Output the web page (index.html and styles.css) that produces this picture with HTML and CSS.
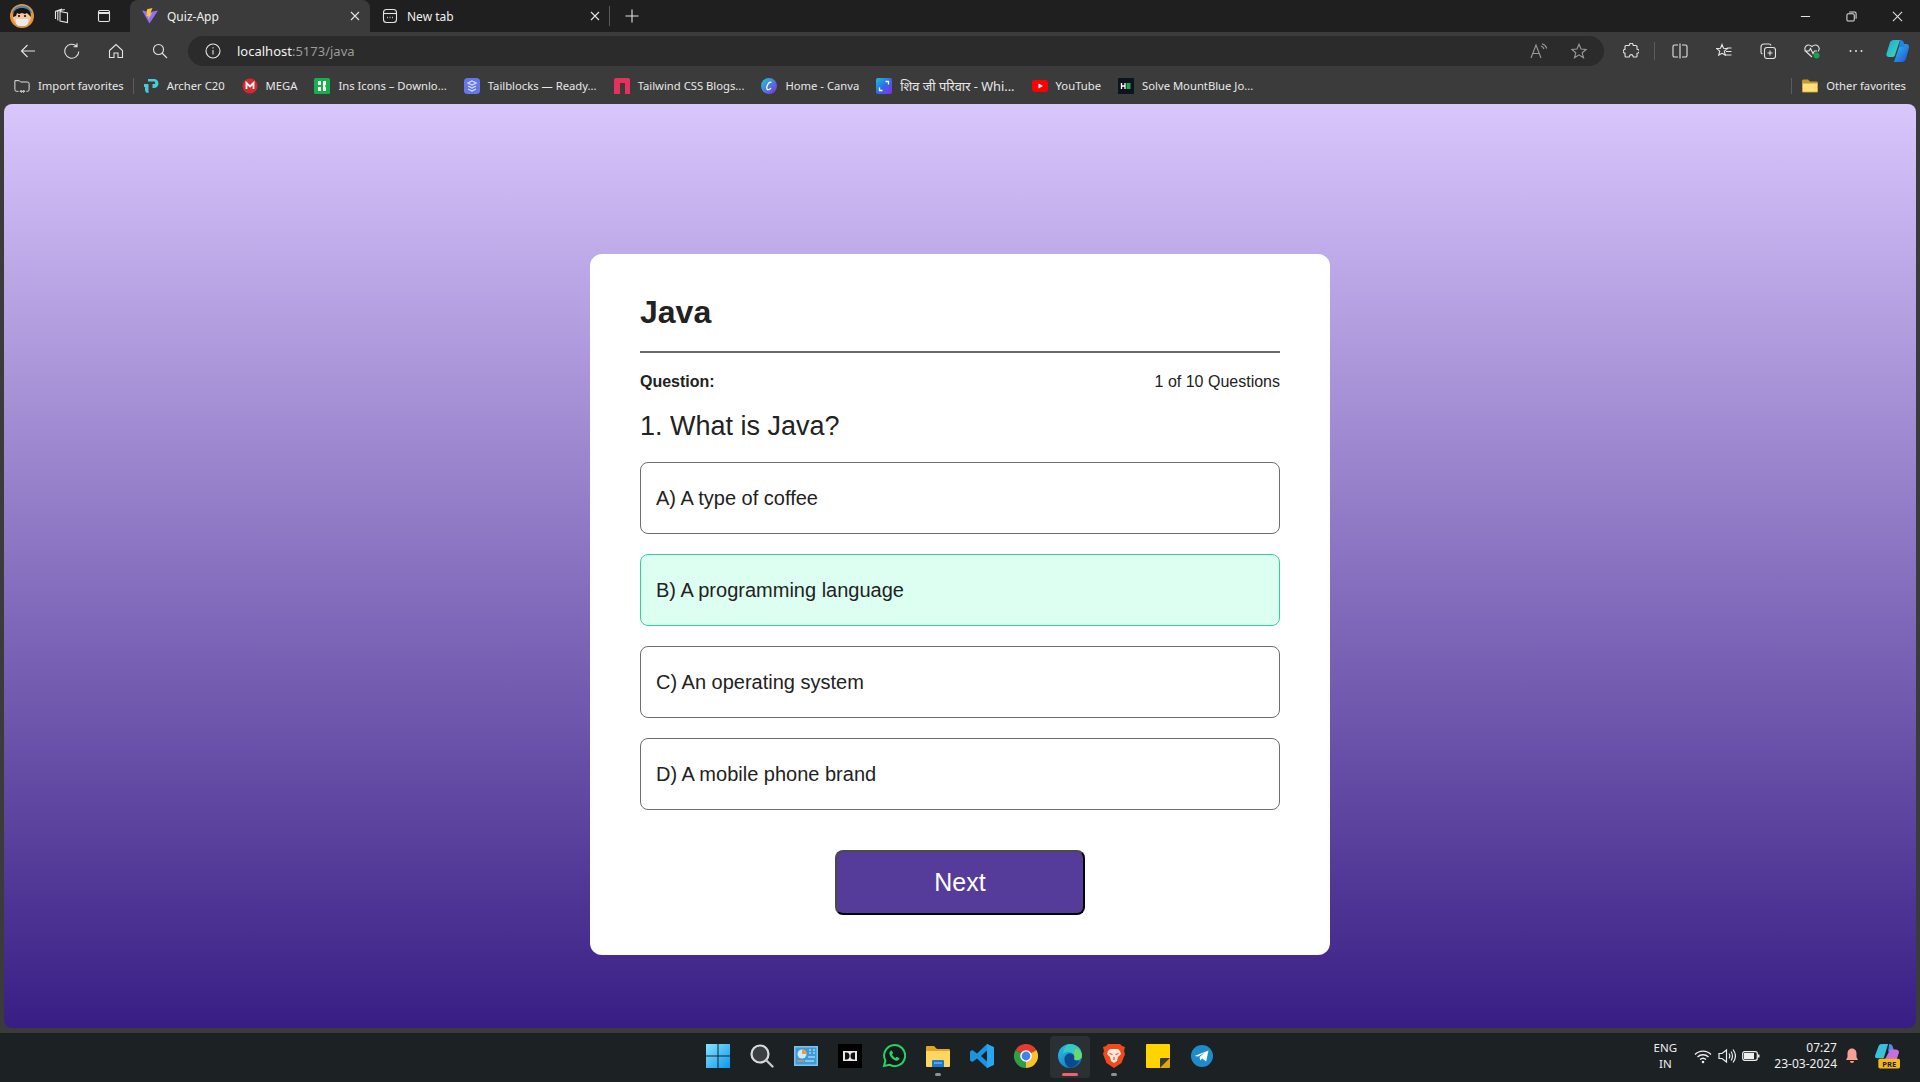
FILE: index.html
```html
<!DOCTYPE html>
<html lang="en">
<head>
  <meta charset="UTF-8">
  <title>Quiz-App</title>
  <link rel="stylesheet" href="styles.css">
</head>
<body>

  <!-- Tab strip -->
  <div class="titlebar">
    <svg class="avatar" viewBox="0 0 24 24">
      <circle cx="12" cy="12" r="12" fill="#e8953a"/>
      <path d="M2 9a10.500 10.500 0 0 1 20 0z" fill="#3f86c9"/>
      <circle cx="12" cy="13" r="9" fill="#f2c9a0"/>
      <path d="M3 13C3 6 7 4 12 4s9 2 9 9l-2-2-2-2-2 1-3-1-3 1-2-1-1 3z" fill="#1b1410"/>
      <circle cx="9" cy="12" r="1.100" fill="#1b1410"/>
      <circle cx="15" cy="12" r="1.100" fill="#1b1410"/>
      <path d="M6 15h12v3a4 4 0 0 1-4 4h-4a4 4 0 0 1-4-4z" fill="#e9ecee"/>
    </svg>
    <button class="icon-btn top-btn">
      <svg class="line-icon" viewBox="0 0 16 16"><path d="M6 3.500l7.500 1.500v9.500L6 13z"/><path d="M3.800 12.500V3l7-1.500M1.500 11V3.500L8 1"/></svg>
    </button>
    <button class="icon-btn top-btn">
      <svg class="line-icon" viewBox="0 0 16 16"><rect x="2.500" y="2.500" width="11" height="11" rx="1.500"/><path d="M2.500 5h11" stroke-width="2"/></svg>
    </button>

    <div class="tab tab-active">
      <svg class="tab-icon" viewBox="0 0 16 16">
        <path d="M0 2.500l7.500 13L16 2.500 8 4z" fill="#8f6fff"/>
        <path d="M10.500 0L5 1.200l-.6 7.300 2-.4-.4 3.400 4.200-6.500-2 .4z" fill="#ffc62b"/>
      </svg>
      <span class="tab-title">Quiz-App</span>
      <svg class="line-icon tab-close" viewBox="0 0 10 10"><path d="M1 1l8 8M9 1L1 9"/></svg>
    </div>
    <div class="tab">
      <svg class="line-icon tab-icon" viewBox="0 0 16 16"><rect x="1.500" y="1.500" width="13" height="13" rx="3"/><path d="M1.500 5.500h13"/><path d="M5 9.500h.8M7.600 9.500h.8M10.200 9.500h.8" stroke-width="1.400"/></svg>
      <span class="tab-title">New tab</span>
      <svg class="line-icon tab-close" viewBox="0 0 10 10"><path d="M1 1l8 8M9 1L1 9"/></svg>
    </div>
    <div class="tab-sep"></div>
    <button class="icon-btn plus-btn">
      <svg class="line-icon" viewBox="0 0 16 16"><path d="M8 1.500v13M1.500 8h13"/></svg>
    </button>

    <div class="window-btns">
      <button class="window-btn"><svg class="line-icon" viewBox="0 0 12 12"><path d="M1 6h10"/></svg></button>
      <button class="window-btn"><svg class="line-icon" viewBox="0 0 12 12"><rect x="1" y="3" width="8" height="8" rx="1.500"/><path d="M3.500 1h6a1.500 1.500 0 0 1 1.500 1.500v6"/></svg></button>
      <button class="window-btn"><svg class="line-icon" viewBox="0 0 12 12"><path d="M1 1l10 10M11 1L1 11"/></svg></button>
    </div>
  </div>

  <!-- Address bar -->
  <div class="toolbar">
    <button class="icon-btn"><svg class="line-icon" viewBox="0 0 16 16"><path d="M15 8H1.500M7.500 2l-6 6 6 6"/></svg></button>
    <button class="icon-btn"><svg class="line-icon" viewBox="0 0 16 16"><path d="M14.800 8.500a7 7 0 1 1-2.300-5.500M13 .3v3.500H9.500"/></svg></button>
    <button class="icon-btn"><svg class="line-icon" viewBox="0 0 16 16"><path d="M1.500 7.500L8 1.500l6.500 6V14.500H10V10H6v4.500H1.500z"/></svg></button>
    <button class="icon-btn"><svg class="line-icon" viewBox="0 0 16 16"><circle cx="6.500" cy="6.500" r="5"/><path d="M10 10l5 5"/></svg></button>

    <div class="address">
      <svg class="line-icon address-info" viewBox="0 0 16 16"><circle cx="8" cy="8" r="7"/><path d="M8 7v4.500M8 4.200v1.300"/></svg>
      <span class="url">localhost<span class="url-rest">:5173/java</span></span>
      <svg class="line-icon dim-icon read-icon" viewBox="0 0 18 16"><path d="M1 15L6 2l5 13M2.800 10.500h6.400"/><path d="M11 3c1.500.5 2.500 1.500 3 3M12 .8c2.500.7 4 2.400 4.800 4.700"/></svg>
      <svg class="line-icon dim-icon star-icon" viewBox="0 0 16 16"><path d="M8 1.200l2 4.800 5.200.4-4 3.400 1.300 5L8 11.900l-4.500 2.900 1.300-5-4-3.400L6 6z"/></svg>
    </div>

    <div class="toolbar-right">
      <button class="icon-btn"><svg class="line-icon" viewBox="0 0 16 16"><path d="M6.500 1.500a1.800 1.800 0 0 1 3.500 0c0 .7 0 1 .5 1H13a1 1 0 0 1 1 1V6c0 .5.300.5 1 .5a1.800 1.800 0 0 1 0 3.500c-.7 0-1 0-1 .5v2.500a1 1 0 0 1-1 1h-2.500c-.5 0-.5-.3-.5-1a1.800 1.800 0 0 0-3.500 0c0 .7 0 1-.5 1H3a1 1 0 0 1-1-1V10.500c0-.5.300-.5-.5-.5a1.800 1.800 0 0 1 0-3.500c.8 0 .5 0 .5-.5V3.500a1 1 0 0 1 1-1h3c.5 0 .5-.3.500-1z"/></svg></button>
      <div class="toolbar-sep"></div>
      <button class="icon-btn"><svg class="line-icon" viewBox="0 0 16 16"><path d="M6 2H2.500A1.500 1.500 0 0 0 1 3.500v9A1.500 1.500 0 0 0 2.500 14H6M10 2h3.500A1.500 1.500 0 0 1 15 3.500v9a1.500 1.500 0 0 1-1.500 1.500H10M8 .5v15"/></svg></button>
      <button class="icon-btn"><svg class="line-icon" viewBox="0 0 16 16"><path d="M6 1.500l1.500 3.800 3.800.3-3 2.500 1 4L6 10.300l-3.300 1.800 1-4-3-2.500 3.800-.3zM11 5h4.500M10 8.500h5.500M9.500 12h6"/></svg></button>
      <button class="icon-btn"><svg class="line-icon" viewBox="0 0 16 16"><rect x="4.500" y="4.500" width="11" height="11" rx="2.500"/><path d="M10 7.500v5M7.500 10h5"/><path d="M2.500 11A2 2 0 0 1 1 9V4a3 3 0 0 1 3-3h5a2 2 0 0 1 2 1.500"/></svg></button>
      <button class="icon-btn">
        <svg class="line-icon" viewBox="0 0 16 16"><path d="M8 14L2 8.500C-1 5 3-.5 8 3.500 13-.5 17 5 14 8.500M.5 8H5l1.500-2.500L9 10.500 10.500 8H13"/><circle cx="12.500" cy="12.500" r="3" fill="#16a34a" stroke="none"/></svg>
      </button>
      <button class="icon-btn"><svg class="dots" viewBox="0 0 16 16"><circle cx="2.500" cy="8" r="1"/><circle cx="8" cy="8" r="1"/><circle cx="13.500" cy="8" r="1"/></svg></button>
      <svg class="copilot" viewBox="0 0 24 24">
        <defs>
          <linearGradient id="cop-a" x1="0" y1="0" x2="1" y2="1"><stop offset="0" stop-color="#1fa5e8"/><stop offset="1" stop-color="#3ee0a0"/></linearGradient>
          <linearGradient id="cop-b" x1="0" y1="0" x2="1" y2="1"><stop offset="0" stop-color="#35c1f1"/><stop offset="1" stop-color="#1b4fd8"/></linearGradient>
        </defs>
        <path d="M8 1h6l-5 15c-.5 1.500-1.500 2-3 2H3c-2 0-3-1.500-2.500-3.500l3.500-11C4.500 2 6 1 8 1z" fill="url(#cop-a)"/>
        <path d="M20 5c2 0 3.500 1.500 3 3.500l-3 11c-.5 2.500-2.500 3.500-4 3.500H8l5-15c.5-2 2-3 4-3z" fill="url(#cop-b)"/>
        <path d="M14 1c2 0 3.500 1 4 3l1 4h-6z" fill="#1c87e0"/>
      </svg>
    </div>
  </div>

  <!-- Favorites bar -->
  <div class="favorites">
    <a class="fav" href="#">
      <svg class="line-icon fav-icon" viewBox="0 0 18 18"><path d="M5 15H3a2 2 0 0 1-2-2V3h5l1.500 1.500H15a2 2 0 0 1 2 2v6.500a2 2 0 0 1-2 2h-1M7 15h5M7 15l1.500-1.500M7 15l1.500 1.500M12 15l-1.500-1.500M12 15l-1.500 1.500"/></svg>
      Import favorites
    </a>
    <div class="fav-sep"></div>
    <a class="fav" href="#">
      <svg class="fav-icon" viewBox="0 0 16 16"><path d="M5 1h6a4.500 4.500 0 0 1 0 9H9.500V6H11a1 1 0 0 0 0-2.500H5z" fill="#4acbd6"/><path d="M1 6h4.500v9A3.500 3.500 0 0 1 2 11.500V9H1z" fill="#4acbd6"/></svg>
      Archer C20
    </a>
    <a class="fav" href="#">
      <svg class="fav-icon" viewBox="0 0 16 16"><circle cx="8" cy="8" r="7.500" fill="#d9272e"/><path d="M4.500 11V5l3.500 3.500L11.500 5v6" fill="none" stroke="#fff" stroke-width="1.800"/></svg>
      MEGA
    </a>
    <a class="fav" href="#">
      <svg class="fav-icon" viewBox="0 0 16 16"><rect width="16" height="16" rx="1.500" fill="#17b04c"/><path d="M4 3h3v4H4zM4 9h3v4H4zM9 3h3v3l-1 2 1 2v3H9z" fill="#fff"/></svg>
      Ins Icons – Downlo...
    </a>
    <a class="fav" href="#">
      <svg class="fav-icon" viewBox="0 0 16 16"><rect width="16" height="16" rx="3.500" fill="#6577e8"/><path d="M8 3l4 2-4 2-4-2zM4 8l4 2 4-2M4 11l4 2 4-2" fill="none" stroke="#d9deff" stroke-width="1.200"/></svg>
      Tailblocks — Ready...
    </a>
    <a class="fav" href="#">
      <svg class="fav-icon" viewBox="0 0 16 16"><path d="M2 0h12a2 2 0 0 1 2 2v14h-5V5H6v11H0V2a2 2 0 0 1 2-2z" fill="#e8305f"/></svg>
      Tailwind CSS Blogs...
    </a>
    <a class="fav" href="#">
      <svg class="fav-icon" viewBox="0 0 16 16">
        <defs><linearGradient id="canva" x1="0" y1="0" x2="1" y2="1"><stop offset="0" stop-color="#1ccdd0"/><stop offset="1" stop-color="#7d2ae8"/></linearGradient></defs>
        <circle cx="8" cy="8" r="8" fill="url(#canva)"/>
        <path d="M10.500 4.500C8 3 5 8 6 11c.5 1.500 3 .5 4-1" fill="none" stroke="#fff" stroke-width="1.200"/>
      </svg>
      Home - Canva
    </a>
    <a class="fav" href="#">
      <svg class="fav-icon" viewBox="0 0 16 16">
        <defs><linearGradient id="shiv" x1="0" y1="0" x2="1" y2="1"><stop offset="0" stop-color="#16c5d8"/><stop offset=".5" stop-color="#2f6ae8"/><stop offset="1" stop-color="#8b2be2"/></linearGradient></defs>
        <rect width="16" height="16" rx="2" fill="url(#shiv)"/>
        <path d="M9.500 3.500H12.500V6.500M6.500 12.500H3.500V9.500" fill="none" stroke="#fff" stroke-width="1.300"/>
      </svg>
      <span class="fav-hindi" lang="hi">शिव जी परिवार - Whi...</span>
    </a>
    <a class="fav" href="#">
      <svg class="fav-icon" viewBox="0 0 16 16"><rect y="2" width="16" height="12" rx="3" fill="#f00"/><path d="M6.500 5.500L11 8l-4.500 2.500z" fill="#fff"/></svg>
      YouTube
    </a>
    <a class="fav" href="#">
      <svg class="fav-icon" viewBox="0 0 16 16"><rect width="16" height="16" fill="#0e141e"/><path d="M3.500 5v6M7 5v6M3.500 8H7" stroke="#fff" stroke-width="1.300"/><rect x="8.500" y="5" width="4" height="6" fill="#1ba94c"/></svg>
      Solve MountBlue Jo...
    </a>
    <div class="fav-other">
      <div class="fav-sep"></div>
      <a class="fav" href="#">
        <svg class="fav-icon" viewBox="0 0 16 16"><path d="M0 3a1.500 1.500 0 0 1 1.500-1.500H6L8 3.500h6.500A1.500 1.500 0 0 1 16 5v8.500a1 1 0 0 1-1 1H1a1 1 0 0 1-1-1z" fill="#c49a2b"/><path d="M.8 5.500h14.400v8.200H.8z" fill="#ffdf7e"/></svg>
        Other favorites
      </a>
    </div>
  </div>

  <!-- Page content -->
  <div class="viewport">
    <main class="page">
      <section class="quiz-card">
        <h1 class="quiz-title">Java</h1>
        <div class="quiz-meta">
          <b>Question:</b>
          <span>1 of 10 Questions</span>
        </div>
        <h2 class="quiz-question">1. What is Java?</h2>
        <div class="options">
          <div class="option">A) A type of coffee</div>
          <div class="option option-selected">B) A programming language</div>
          <div class="option">C) An operating system</div>
          <div class="option">D) A mobile phone brand</div>
        </div>
        <button class="btn-next">Next</button>
      </section>
    </main>
  </div>

  <!-- Windows taskbar -->
  <footer class="taskbar">
    <div class="task-apps">
      <div class="task-app">
        <svg viewBox="0 0 24 24">
          <defs><linearGradient id="win" x1="0" y1="0" x2="1" y2="1"><stop offset="0" stop-color="#85e5ff"/><stop offset="1" stop-color="#0c97ee"/></linearGradient></defs>
          <path d="M0 0h11.500v11.500H0zM12.500 0H24v11.500H12.500zM0 12.500h11.500V24H0zM12.500 12.500H24V24H12.500z" fill="url(#win)"/>
        </svg>
      </div>
      <div class="task-app">
        <svg viewBox="0 0 24 24"><circle cx="10" cy="10" r="8.500" fill="#3a3f42" stroke="#dcdcdc" stroke-width="2.200"/><path d="M16.500 16.500L22.500 22.500" stroke="#c8c8c8" stroke-width="2.400" stroke-linecap="round"/></svg>
      </div>
      <div class="task-app">
        <svg viewBox="0 0 24 24"><rect y="2" width="24" height="20" fill="#7cc4ee"/><rect x="1.500" y="3.500" width="21" height="17" fill="#3f9bd8"/><circle cx="8" cy="10" r="4.500" fill="#cfe9fa"/><path d="M8 10V5.500A4.500 4.500 0 0 1 12.500 10z" fill="#f09a3a"/><path d="M3 17h7" stroke="#f09a3a" stroke-width="1.200"/><path d="M11 17h9M14 13h7M15 6h2M19 6h2M15 9h2M19 9h2" stroke="#d8effc" stroke-width="1.200"/></svg>
      </div>
      <div class="task-app">
        <svg viewBox="0 0 24 24"><rect width="24" height="24" fill="#000"/><path d="M5 7h14v10H5z" fill="#e8e8e8"/><path d="M7 8.500h1.500c2 0 3 1.500 3 3.500s-1 3.500-3 3.500H7zM17 8.500h-1.500c-2 0-3 1.500-3 3.500s1 3.500 3 3.500H17z" fill="#111"/></svg>
      </div>
      <div class="task-app">
        <svg viewBox="0 0 24 24"><path d="M2 22l1.400-5.400A10.500 10.500 0 1 1 7.400 20.700z" fill="#141a1c" stroke="#25d366" stroke-width="2"/><path d="M8.500 7c-1 .8-1.500 2-.8 3.800 1 2.600 3 4.600 5.600 5.600 1.800.6 3 .2 3.800-.8.500-.6.400-1.200 0-1.500l-2-1.100c-.4-.2-.8-.1-1 .2l-.6.700c-1.600-.7-2.800-1.900-3.500-3.500l.7-.6c.3-.3.400-.6.200-1l-1-2c-.3-.5-.9-.5-1.400-.1z" fill="#25d366"/></svg>
      </div>
      <div class="task-app">
        <svg viewBox="0 0 24 24"><path d="M0 3a1 1 0 0 1 1-1h7l3 3h12a1 1 0 0 1 1 1v16H0z" fill="#e0a526"/><path d="M0 7h24v15a1 1 0 0 1-1 1H1a1 1 0 0 1-1-1z" fill="#ffd75e"/><path d="M6 17a1 1 0 0 1 1-1h10a1 1 0 0 1 1 1v6H6z" fill="#1a78d0"/><path d="M8 19h8" stroke="#8ccbf5" stroke-width="1"/></svg>
        <span class="task-dot"></span>
      </div>
      <div class="task-app">
        <svg viewBox="0 0 24 24"><path d="M17 0l7 3.300v17.400L17 24 7 14.500 2.500 18 0 16.500V7.500L2.500 6 7 9.500zM17 6.500L11 12l6 5.500z" fill="#1a94e0" fill-rule="evenodd"/><path d="M17 0l7 3.300v17.400L17 24z" fill="#2aa5ef"/></svg>
      </div>
      <div class="task-app">
        <svg viewBox="0 0 24 24"><path d="M12 12L1.600 6A12 12 0 0 1 22.400 6z" fill="#e33b2e"/><path d="M12 12L22.400 6A12 12 0 0 1 12 24z" fill="#fbc02d"/><path d="M12 12V24A12 12 0 0 1 1.600 6z" fill="#2e9e47"/><circle cx="12" cy="12" r="5.800" fill="#fff"/><circle cx="12" cy="12" r="4.400" fill="#3f81f0"/></svg>
      </div>
      <div class="task-app task-app-active">
        <svg viewBox="0 0 24 24">
          <defs><linearGradient id="edge" x1="0" y1="0" x2="1" y2="1"><stop offset="0" stop-color="#27c4e8"/><stop offset="1" stop-color="#0b63b8"/></linearGradient></defs>
          <circle cx="12" cy="12" r="12" fill="url(#edge)"/>
          <path d="M12 0c7 0 12 5 12 11.500 0 2.500-2 4.500-5 4.500-2 0-3.500-.5-3.500-1.500 1-1 1-2.500 0-4C13.500 7.500 9 7 5 10 5.500 5 8 0 12 0z" fill="#34c9c4"/>
          <path d="M18 4c3.500 2 6 4.500 6 7.500 0 2.500-2 4.500-5 4.500-2 0-3.500-.5-3.500-1.500 1-1 1-2.500 0-4z" fill="#6ad96a"/>
          <path d="M6.500 15c0-4 3.500-6 6.500-5.500 4 .8 3.500 4 3 5 .5 3 4 3 5.500 2-2 4-5 6.500-9 7.500-4-1.500-6-5-6-9z" fill="#0c4a90"/>
        </svg>
        <span class="task-pill"></span>
      </div>
      <div class="task-app">
        <svg viewBox="0 0 24 24"><path d="M6 0h12l2 2 3 1-1 4 1 3-3.500 9L12 24 4.500 19 1 10l1-3-1-4 3-1z" fill="#f04a1c"/><path d="M8 5h8l2 2 1 3-3 3-1 4-3 2-3-2-1-4-3-3 1-3z" fill="#fde8df"/><path d="M7.500 9.500l3 1M16.500 9.500l-3 1M12 13v3" stroke="#f04a1c" stroke-width="1.200"/></svg>
        <span class="task-dot"></span>
      </div>
      <div class="task-app">
        <svg viewBox="0 0 24 24"><path d="M1 0h22a1 1 0 0 1 1 1v13L14 24H1a1 1 0 0 1-1-1V1a1 1 0 0 1 1-1z" fill="#ffd400"/><path d="M14 24V15a1 1 0 0 1 1-1h9z" fill="#3d3a30"/><path d="M14 24l10-10v9a1 1 0 0 1-1 1z" fill="#e0a810"/></svg>
      </div>
      <div class="task-app">
        <svg viewBox="0 0 24 24"><circle cx="12" cy="12" r="11" fill="#1e8ccb"/><path d="M4.500 12l14-5.500-2.300 11-4-3-2 2-.6-3.600 5.400-4.400-7 4z" fill="#fff"/></svg>
      </div>
    </div>

    <div class="tray">
      <div class="tray-lang">ENG<br>IN</div>
      <svg class="tray-icon" viewBox="0 0 18 18"><path d="M1 7.500c4.500-4.500 11.500-4.500 16 0M3.500 10c3-3 8-3 11 0M6 12.500c1.700-1.500 4.300-1.500 6 0" fill="none" stroke="#eee" stroke-width="1.400"/><circle cx="9" cy="15" r="1.300" fill="#eee"/></svg>
      <svg class="tray-icon" viewBox="0 0 18 18"><path d="M1 6.500h3L8.500 3v12L4 11.500H1z" fill="none" stroke="#eee" stroke-width="1.200"/><path d="M11 6.500c1 1.500 1 3.500 0 5M13 4.500c2 2.500 2 6.500 0 9M15 2.500c3 4 3 9 0 13" fill="none" stroke="#eee" stroke-width="1.200"/></svg>
      <svg class="tray-icon" viewBox="0 0 18 18"><rect x=".7" y="4.700" width="14.600" height="8.600" rx="2" fill="none" stroke="#eee" stroke-width="1.200"/><rect x="2" y="6" width="10" height="6" fill="#eee"/><path d="M16 7.500h1.500v3H16z" fill="#eee"/></svg>
      <div class="tray-clock">07:27<br>23-03-2024</div>
      <svg class="tray-bell" viewBox="0 0 16 16"><path d="M8 .5c3 0 4.500 2.500 4.500 5V9l1.500 3H2l1.500-3V5.500C3.500 3 5 .5 8 .5zM6 13h4a2 2 0 0 1-4 0z" fill="#f8a093"/></svg>
      <svg class="tray-copilot" viewBox="0 0 24 24">
        <path d="M7 1h6l-4 13H3C1.500 14 .5 13 1 11.500l3-8C4.500 2 5.500 1 7 1z" fill="#3ac0d8"/>
        <path d="M14 1c2 0 3 1 3.500 3L19 8h-6z" fill="#4a8cf0"/>
        <path d="M15 6h5c2 0 3.500 1.500 3 3l-2 6c-.5 1.500-2 2-3 2H9z" fill="#c86ee0"/>
        <rect x="4" y="14.500" width="20" height="9" rx="1.500" fill="#f5b81c"/>
        <text class="pre-text" x="14" y="22">PRE</text>
      </svg>
    </div>
  </footer>

</body>
</html>
```

FILE: styles.css
```css
/* Basic page styling */
* {
  box-sizing: border-box;
}

body {
  margin: 0;
  height: 1082px;
  overflow: hidden;
  display: flex;
  flex-direction: column;
  background-color: #3b3b3b;
  font-family: "Noto Sans", "Open Sans", sans-serif;
  color: #e8e8e8;
}

button {
  font-family: inherit;
}

svg {
  display: block;
  flex: none;
}

/* Shared browser icons */
.line-icon {
  fill: none;
  stroke: #e4e4e4;
  stroke-width: 1.1;
}

.icon-btn {
  width: 44px;
  height: 30px;
  padding: 0;
  border: 0;
  background: none;
  display: flex;
  align-items: center;
  justify-content: center;
  flex: none;
}

.icon-btn svg {
  width: 16px;
  height: 16px;
}

/* Tab strip */
.titlebar {
  height: 32px;
  display: flex;
  align-items: center;
  padding-left: 10px;
  background-color: #1f1f1f;
  font-size: 12px;
}

.avatar {
  width: 24px;
  height: 24px;
  margin-right: 7px;
}

.top-btn {
  width: 42px;
}

.tab {
  width: 240px;
  height: 32px;
  display: flex;
  align-items: center;
  padding: 0 10px 0 12px;
  border-radius: 8px 8px 0 0;
}

.tab-active {
  margin-left: 5px;
  background-color: #3b3b3b;
}

.tab-icon {
  width: 16px;
  height: 16px;
  margin-right: 9px;
}

.tab-title {
  flex: 1;
  color: #f0f0f0;
}

.tab-close {
  width: 10px;
  height: 10px;
}

.tab-sep {
  width: 1px;
  height: 20px;
  margin-left: -1px;
  background-color: #5a5a5a;
}

.plus-btn {
  margin-left: 0;
}

.window-btns {
  margin-left: auto;
  display: flex;
}

.window-btn {
  width: 46px;
  height: 32px;
  padding: 0;
  border: 0;
  background: none;
  display: flex;
  align-items: center;
  justify-content: center;
}

.window-btn svg {
  width: 11px;
  height: 11px;
}

/* Address bar */
.toolbar {
  height: 37px;
  display: flex;
  align-items: flex-start;
  padding: 4px 10px 0 6px;
  background-color: #3b3b3b;
}

.address {
  flex: 1;
  height: 30px;
  margin-left: 6px;
  display: flex;
  align-items: center;
  padding: 0 17px 0 17px;
  border-radius: 15px;
  background-color: #2b2b2b;
}

.address-info {
  width: 16px;
  height: 16px;
  margin-right: 16px;
}

.url {
  flex: 1;
  font-size: 13px;
  color: #f2f2f2;
}

.url-rest {
  color: #9c9c9c;
}

.dim-icon {
  stroke: #9a9a9a;
}

.read-icon {
  width: 18px;
  height: 16px;
  margin-right: 23px;
}

.star-icon {
  width: 16px;
  height: 16px;
}

.toolbar-right {
  display: flex;
  align-items: center;
  margin-left: 5px;
}

.toolbar-sep {
  width: 1px;
  height: 18px;
  margin: 0 3px 0 1px;
  background-color: #5c5c5c;
}

.dots {
  fill: #e4e4e4;
}

.copilot {
  width: 24px;
  height: 24px;
  margin-left: 8px;
}

/* Favorites bar */
.favorites {
  height: 35px;
  display: flex;
  align-items: center;
  gap: 17px;
  padding: 0 14px 2px;
  background-color: #3b3b3b;
  font-size: 11.25px;
}

.fav {
  display: flex;
  align-items: center;
  gap: 8px;
  color: #e8e8e8;
  text-decoration: none;
  white-space: nowrap;
}

.fav-hindi {
  font-size: 12.8px;
  line-height: 16px;
}

.fav-icon {
  width: 16px;
  height: 16px;
}

.fav-sep {
  width: 1px;
  height: 16px;
  margin: 0 -8px;
  background-color: #5c5c5c;
}

.fav-other {
  margin-left: auto;
  display: flex;
  align-items: center;
  gap: 18px;
}

/* Page gradient */
.viewport {
  height: 924px;
  padding: 0 4px;
}

.page {
  height: 100%;
  padding-top: 150px;
  border-radius: 8px;
  background: linear-gradient(to bottom, #d9c6fc, #381e84);
  font-family: "Liberation Sans", Arial, sans-serif;
  color: #222222;
}

/* Quiz card */
.quiz-card {
  width: 740px;
  height: 701px;
  margin: 0 auto;
  padding: 40px 50px 40px;
  border-radius: 12px;
  background-color: #ffffff;
  display: flex;
  flex-direction: column;
}

.quiz-title {
  margin: 0;
  padding-bottom: 20px;
  border-bottom: 2px solid #6b6b6b;
  font-size: 32px;
  line-height: 37px;
  font-weight: bold;
}

.quiz-meta {
  margin-top: 20px;
  display: flex;
  justify-content: space-between;
  font-size: 16px;
  line-height: 18px;
}

.quiz-question {
  margin: 20px 0;
  font-size: 27px;
  line-height: 31px;
  font-weight: normal;
}

.options {
  display: flex;
  flex-direction: column;
  gap: 20px;
}

.option {
  height: 72px;
  display: flex;
  align-items: center;
  padding: 0 15px;
  border: 1px solid #6e6e6e;
  border-radius: 8px;
  font-size: 20px;
}

.option-selected {
  border-color: #2ed39b;
  background-color: #ddfff2;
}

.btn-next {
  width: 250px;
  height: 65px;
  margin: 40px auto 0;
  border: 2px solid;
  border-color: #4a4a4a #000000 #000000 #4a4a4a;
  border-radius: 8px;
  background-color: #553c9a;
  color: #ffffff;
  font-family: "Liberation Sans", Arial, sans-serif;
  font-size: 25px;
}

/* Windows taskbar */
.taskbar {
  margin-top: 5px;
  height: 49px;
  padding-bottom: 3px;
  display: grid;
  grid-template-columns: 1fr auto 1fr;
  align-items: center;
  background-color: #1c2123;
}

.task-apps {
  grid-column: 2;
  display: flex;
  gap: 20px;
}

.task-app {
  position: relative;
  width: 24px;
  height: 24px;
}

.task-app svg {
  width: 24px;
  height: 24px;
}

.task-app-active::before {
  content: '';
  position: absolute;
  left: -8px;
  top: -8px;
  width: 40px;
  height: 42px;
  border-radius: 4px;
  background-color: #2b3033;
}

.task-app-active svg {
  position: relative;
}

.task-dot {
  position: absolute;
  left: 9px;
  top: 29px;
  width: 6px;
  height: 3px;
  border-radius: 2px;
  background-color: #8e9193;
}

.task-pill {
  position: absolute;
  left: 4px;
  top: 29px;
  width: 16px;
  height: 3px;
  border-radius: 2px;
  background-color: #f0626c;
}

.tray {
  grid-column: 3;
  justify-self: end;
  display: flex;
  align-items: center;
  padding-right: 20px;
  font-size: 12px;
  line-height: 16px;
  color: #f0f0f0;
}

.tray-lang {
  width: 24px;
  margin-right: 17px;
  text-align: center;
  font-size: 11.5px;
}

.tray-icon {
  width: 18px;
  height: 18px;
  margin-right: 6px;
}

.tray-clock {
  margin-left: 8px;
  text-align: right;
  font-size: 12px;
}

.tray-bell {
  width: 16px;
  height: 16px;
  margin-left: 7px;
}

.tray-copilot {
  width: 26px;
  height: 26px;
  margin-left: 14px;
}

.pre-text {
  font-size: 7px;
  font-weight: bold;
  fill: #222222;
  text-anchor: middle;
}
```
